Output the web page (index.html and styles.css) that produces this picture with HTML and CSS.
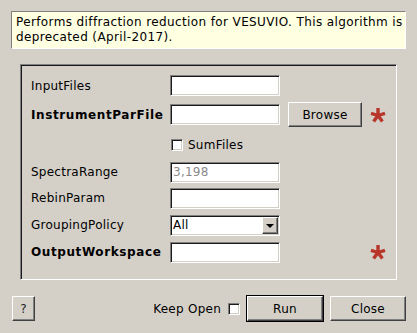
FILE: index.html
```html
<!DOCTYPE html>
<html>
<head>
<meta charset="utf-8">
<link rel="stylesheet" href="styles.css">
</head>
<body>
<div class="dialog">
  <div class="desc">Performs diffraction reduction for VESUVIO. This algorithm is<br>deprecated (April-2017).</div>
  <div class="group">
    <div class="form">
      <div class="lbl r1">InputFiles</div>
      <div class="field r1"></div>

      <div class="lbl bold r2">InstrumentParFile</div>
      <div class="field r2"></div>
      <div class="btn browse r2">Browse</div>
      <svg class="star r2" viewBox="0 0 16 16" width="16" height="16"><g stroke="#b8352a" stroke-width="3.4" stroke-linecap="butt"><line x1="8" y1="8.5" x2="8" y2="1"/><line x1="8" y1="8.5" x2="15" y2="6.3"/><line x1="8" y1="8.5" x2="12.4" y2="14.6"/><line x1="8" y1="8.5" x2="3.6" y2="14.6"/><line x1="8" y1="8.5" x2="1" y2="6.3"/></g></svg>

      <div class="check-row r3"><span class="cb"></span><span class="cb-lbl">SumFiles</span></div>

      <div class="lbl r4">SpectraRange</div>
      <div class="field disabled r4">3,198</div>

      <div class="lbl r5">RebinParam</div>
      <div class="field r5"></div>

      <div class="lbl r6">GroupingPolicy</div>
      <div class="field combo r6"><span class="combo-text">All</span><span class="combo-btn"><span class="arrow"></span></span></div>

      <div class="lbl bold r7">OutputWorkspace</div>
      <div class="field r7"></div>
      <svg class="star r7" viewBox="0 0 16 16" width="16" height="16"><g stroke="#b8352a" stroke-width="3.4" stroke-linecap="butt"><line x1="8" y1="8.5" x2="8" y2="1"/><line x1="8" y1="8.5" x2="15" y2="6.3"/><line x1="8" y1="8.5" x2="12.4" y2="14.6"/><line x1="8" y1="8.5" x2="3.6" y2="14.6"/><line x1="8" y1="8.5" x2="1" y2="6.3"/></g></svg>
    </div>
  </div>
  <div class="bottom">
    <div class="btn help">?</div>
    <div class="spacer"></div>
    <span class="keep">Keep Open</span>
    <span class="cb keep-cb"></span>
    <div class="default-frame"><div class="btn run">Run</div></div>
    <div class="btn close">Close</div>
  </div>
</div>
</body>
</html>
```
FILE: styles.css
```css
* { box-sizing: border-box; }
html, body {
  margin: 0;
  padding: 0;
  background: #d4d0c8;
  width: 417px;
  height: 333px;
  overflow: hidden;
}
body {
  font-family: "DejaVu Sans", sans-serif;
  font-size: 12px;
  color: #000;
  letter-spacing: 0.25px;
}
.dialog {
  display: flex;
  flex-direction: column;
}
.desc {
  margin: 11px 11px 0 11px;
  height: 38px;
  background: #ffffe1;
  border: 1px solid;
  border-color: #808080 #ffffff #ffffff #808080;
  padding: 3px 0 0 4px;
  line-height: 15px;
  letter-spacing: 0.38px;
  white-space: nowrap;
  overflow: hidden;
}
.group {
  margin: 15px 0 0 20px;
  width: 377px;
  height: 216px;
  border: 1px solid;
  border-color: #808080 #ffffff #ffffff #808080;
  box-shadow: inset 1px 1px 0 #1a1a1a;
  padding: 6px 0 0 10px;
}
.form {
  display: grid;
  grid-template-columns: 139px 110px 8px 74px 8px 16px;
  grid-template-rows: 29px 29px 31px 24px 28px 26px 28px;
  align-items: center;
}
.r1 { grid-row: 1; }
.r2 { grid-row: 2; }
.r3 { grid-row: 3; }
.r4 { grid-row: 4; }
.r5 { grid-row: 5; }
.r6 { grid-row: 6; }
.r7 { grid-row: 7; }
.lbl { grid-column: 1; white-space: nowrap; }
.bold { font-weight: bold; letter-spacing: 0.6px; }
.field {
  grid-column: 2;
  height: 21px;
  background: #fff;
  border: 1px solid;
  border-color: #808080 #ffffff #ffffff #808080;
  box-shadow: inset 1px 1px 0 #1a1a1a, inset -1px -1px 0 #d4d0c8;
  padding: 0 0 0 2px;
  line-height: 19px;
  white-space: nowrap;
}
.field.disabled { color: #8a8a8a; }
.combo {
  display: flex;
  justify-content: space-between;
  padding: 1px 1px 1px 2px;
  line-height: 17px;
}
.combo-btn {
  width: 16px;
  height: 17px;
  background: #d4d0c8;
  border: 1px solid;
  border-color: #ffffff #404040 #404040 #ffffff;
  box-shadow: inset -1px -1px 0 #808080;
  display: flex;
  align-items: center;
  justify-content: center;
}
.arrow {
  width: 0;
  height: 0;
  border-left: 4px solid transparent;
  border-right: 4px solid transparent;
  border-top: 4px solid #000;
  margin-top: 1px;
}
.btn {
  background: #d4d0c8;
  border: 1px solid;
  border-color: #ffffff #404040 #404040 #ffffff;
  box-shadow: inset -1px -1px 0 #808080;
  display: flex;
  align-items: center;
  justify-content: center;
}
.browse {
  grid-column: 4;
  height: 25px;
}
.star { display: block; }
.form .star { grid-column: 6; }
.check-row {
  grid-column: 2 / span 3;
  display: flex;
  align-items: center;
  padding-left: 1px;
}
.cb {
  display: inline-block;
  width: 12px;
  height: 12px;
  background: #fff;
  border: 1px solid;
  border-color: #808080 #ffffff #ffffff #808080;
  box-shadow: inset 1px 1px 0 #1a1a1a, inset -1px -1px 0 #d4d0c8;
}
.cb-lbl { margin-left: 5px; }
.bottom {
  margin-top: 15px;
  height: 27px;
  display: flex;
  align-items: center;
  padding: 0 11px 0 12px;
}
.help {
  width: 23px;
  height: 25px;
  color: #222;
}
.spacer { flex: 1; }
.keep { margin-right: 7px; }
.keep-cb { margin-right: 6px; }
.default-frame {
  border: 1px solid #000;
  width: 78px;
  height: 27px;
}
.run {
  width: 100%;
  height: 100%;
}
.close {
  margin-left: 6px;
  width: 76px;
  height: 25px;
}
```
